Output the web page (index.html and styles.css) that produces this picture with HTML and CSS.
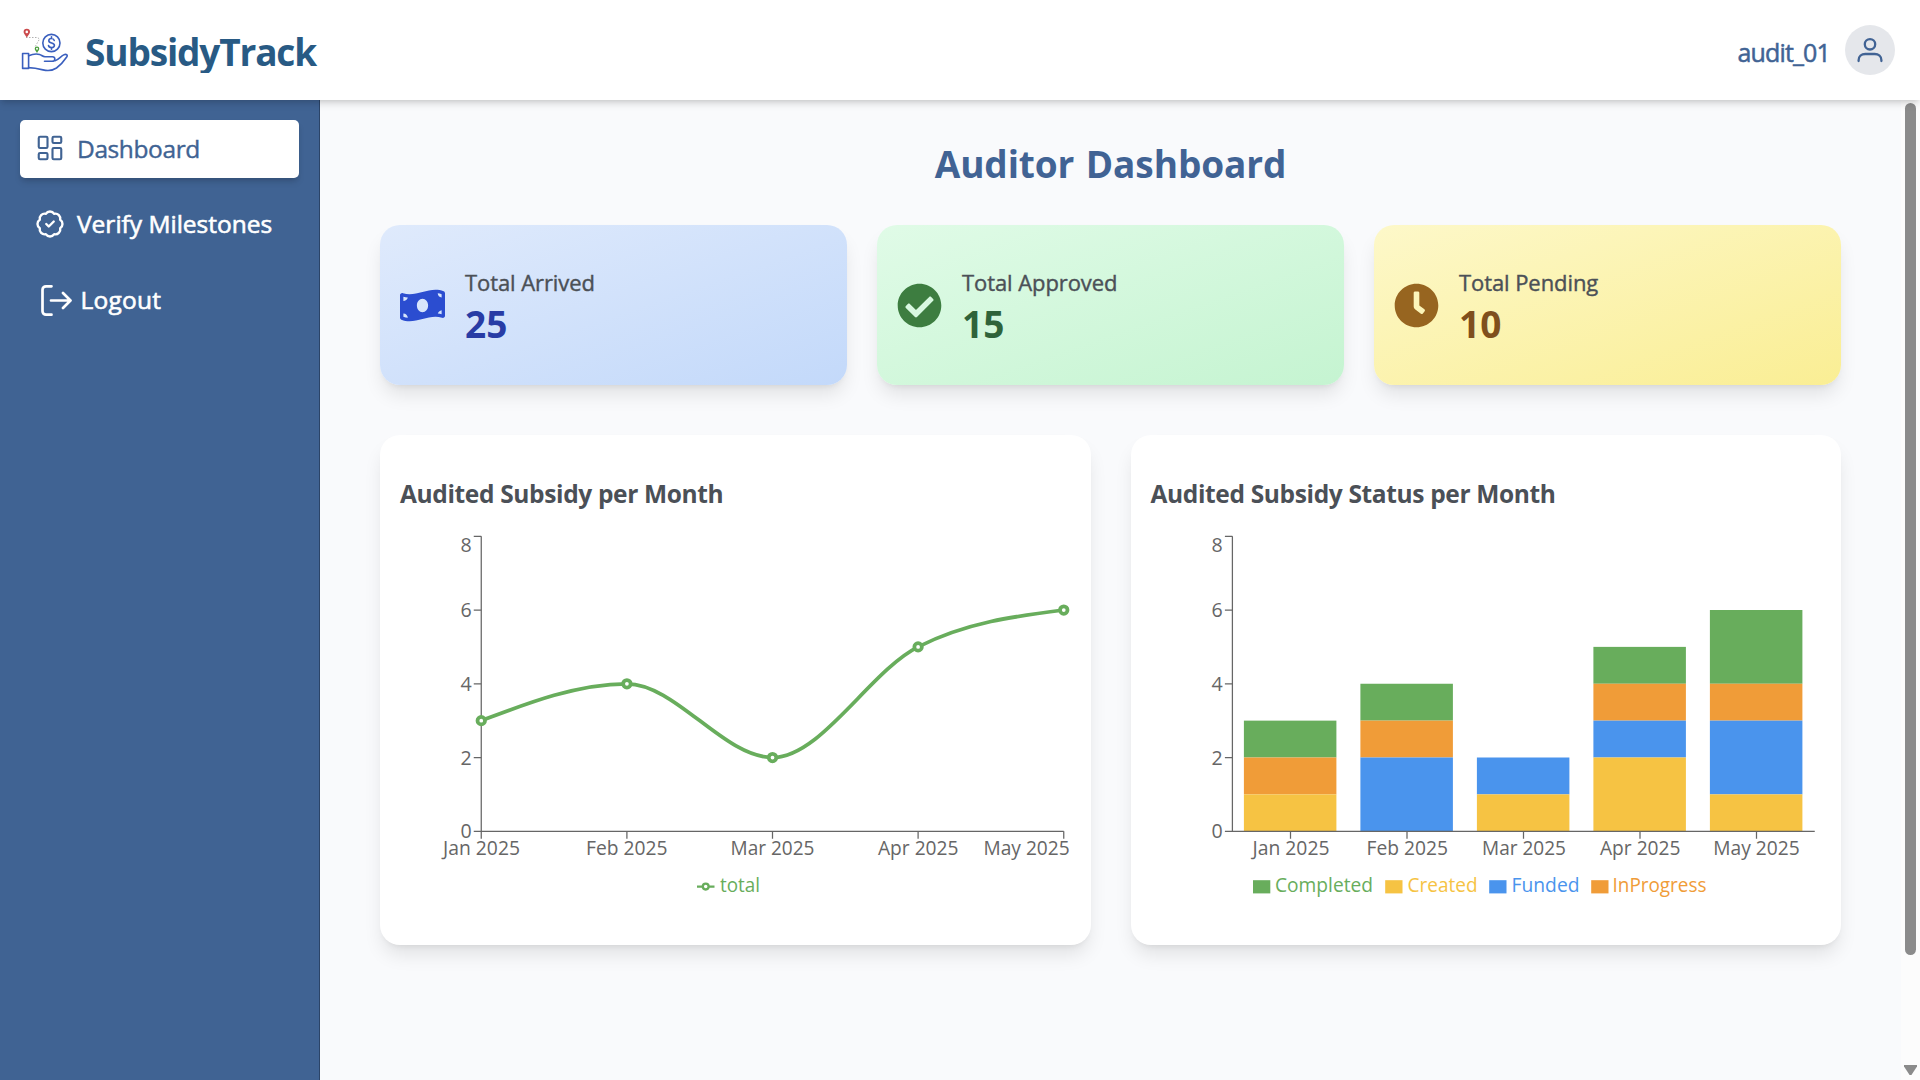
FILE: index.html
```html
<!DOCTYPE html>
<html lang="en">
<head>
<meta charset="utf-8">
<title>SubsidyTrack</title>
<link rel="stylesheet" href="styles.css">
</head>
<body>
<header class="topbar">
  <div class="brand">
    <svg class="brand-logo" width="50" height="50" viewBox="0 0 50 50" fill="none">
      <path d="M6 12.500h11.500l2 1.500-4.500 8" stroke="#9a9a9a" stroke-width=".8" stroke-dasharray="1.500 1.500"/>
      <path d="M6.800 12.500C5 9.500 3.600 8.300 3.600 6.900a3.200 3.200 0 0 1 6.400 0c0 1.400-1.400 2.600-3.200 5.600z" fill="#cb4a4c"/>
      <circle cx="6.800" cy="6.900" r="1.300" fill="#fff"/>
      <path d="M17 28c-1.300-2.300-2.300-3.200-2.300-4.300a2.300 2.300 0 0 1 4.600 0c0 1.100-1 2-2.300 4.300z" fill="#4a9e3c"/>
      <circle cx="17" cy="23.700" r="1" fill="#fff"/>
      <g stroke="#3a5fbe" stroke-width="1.600" stroke-linecap="round" stroke-linejoin="round">
        <circle cx="31.400" cy="18" r="8.600"/>
        <path d="M34.200 15.400c-.3-1.300-1.300-1.900-2.700-1.900-1.500 0-2.700.8-2.700 2.200 0 3.200 5.600 1.400 5.600 4.600 0 1.400-1.300 2.300-2.900 2.300-1.500 0-2.700-.7-3-2.100M31.500 11.800v1.700M31.500 22.600v1.700"/>
        <path d="M2.600 28.500h6v14.900h-6z"/>
        <path d="M8.600 30.700c3-1.300 7.800-2.200 11-1.300 2 .6 3 2.200 5.400 2.300h7.500c3 0 3.400 4.500-.5 4.600h-7.500"/>
        <path d="M35 35.800c3.500-1.200 5.500-4.200 8.700-5.900 2.500-1.200 4.500 0 3 2.100-3 4.500-6.500 8.300-10.200 11-4 2.700-9 3-13.500 1.900-5-1.300-9-2.200-14.400-2.300"/>
      </g>
    </svg>
    <span class="brand-name">SubsidyTrack</span>
  </div>
  <div class="account">
    <span class="account-name">audit_01</span>
    <span class="avatar">
      <svg width="30" height="30" viewBox="0 0 30 30" fill="none" stroke="#416394" stroke-width="2.300" stroke-linecap="round">
        <circle cx="15" cy="9.300" r="5.200"/>
        <path d="M3.600 26v-.8c0-3.700 2.900-6.200 6.700-6.200h9.400c3.800 0 6.700 2.500 6.700 6.200v.8"/>
      </svg>
    </span>
  </div>
</header>
<div class="shell">
  <nav class="sidebar">
    <a class="nav-item active">
      <svg width="30" height="30" viewBox="0 0 24 24" fill="none" stroke="currentColor" stroke-width="1.700" stroke-linejoin="round"><rect x="3" y="3" width="7" height="9" rx="1"/><rect x="14" y="3" width="7" height="5" rx="1"/><rect x="14" y="12" width="7" height="9" rx="1"/><rect x="3" y="16" width="7" height="5" rx="1"/></svg>
      <span class="dashboard-label">Dashboard</span>
    </a>
    <a class="nav-item">
      <svg width="30" height="30" viewBox="0 0 24 24" fill="none" stroke="currentColor" stroke-width="1.900" stroke-linecap="round" stroke-linejoin="round"><path d="M3.850 8.620a4 4 0 0 1 4.780-4.770 4 4 0 0 1 6.740 0 4 4 0 0 1 4.780 4.780 4 4 0 0 1 0 6.740 4 4 0 0 1-4.770 4.780 4 4 0 0 1-6.750 0 4 4 0 0 1-4.780-4.770 4 4 0 0 1 0-6.760Z"/><path d="m9 12 2 2 4-4"/></svg>
      <span>Verify Milestones</span>
    </a>
    <a class="nav-item logout">
      <svg width="34" height="34" viewBox="0 0 34 34" fill="none" stroke="currentColor" stroke-width="2.700" stroke-linecap="round" stroke-linejoin="round"><path d="M13.500 3.300H8a3.500 3.500 0 0 0-3.500 3.500v21.400A3.500 3.500 0 0 0 8 31.700h5.500"/><path d="M13 17.500h19M25 10l7.500 7.500L25 25"/></svg>
      <span>Logout</span>
    </a>
  </nav>
  <main class="content">
    <h1 class="page-title">Auditor Dashboard</h1>
    <section class="stats">
      <article class="stat blue">
        <svg width="45" height="45" viewBox="0 0 640 512" fill="currentColor"><path d="M621.160 54.460C582.370 38.190 543.550 32 504.750 32c-123.170-.01-246.330 62.340-369.500 62.340-30.890 0-61.760-3.920-92.650-13.720-3.470-1.100-6.950-1.620-10.350-1.620C15.040 79 0 92.320 0 110.810v317.260c0 12.630 7.230 24.600 18.840 29.460C57.630 473.810 96.450 480 135.250 480c123.170 0 246.340-62.350 369.510-62.350 30.890 0 61.760 3.920 92.650 13.720 3.470 1.100 6.950 1.620 10.350 1.620 17.210 0 32.250-13.320 32.250-31.810V83.930c-.01-12.640-7.240-24.600-18.850-29.470zM48 132.220c20.120 5.040 41.120 7.570 62.720 8.930C104.840 170.540 79 192.690 48 192.690v-60.470zm0 285v-47.780c34.370 0 62.180 27.270 63.710 61.400-22.530-1.810-43.590-6.310-63.710-13.620zM320 352c-44.190 0-80-42.990-80-96 0-53.020 35.820-96 80-96s80 42.980 80 96c0 53.030-35.830 96-80 96zm272 27.780c-17.520-4.390-35.710-6.850-54.320-8.440 5.870-26.080 27.500-45.880 54.320-49.280v57.720zm0-236.110c-30.890-3.910-54.860-29.700-55.810-61.550 19.540 2.170 38.090 6.230 55.810 12.660v48.890z"/></svg>
        <div class="stat-text"><p class="stat-label">Total Arrived</p><p class="stat-value">25</p></div>
      </article>
      <article class="stat green">
        <svg width="45" height="45" viewBox="0 0 512 512" fill="currentColor"><path d="M504 256c0 136.967-111.033 248-248 248S8 392.967 8 256 119.033 8 256 8s248 111.033 248 248zM227.314 387.314l184-184c6.248-6.248 6.248-16.379 0-22.627l-22.627-22.627c-6.248-6.249-16.379-6.249-22.628 0L216 308.118l-70.059-70.059c-6.248-6.248-16.379-6.248-22.628 0l-22.627 22.627c-6.248 6.248-6.248 16.379 0 22.627l104 104c6.249 6.249 16.379 6.249 22.628.001z"/></svg>
        <div class="stat-text"><p class="stat-label">Total Approved</p><p class="stat-value">15</p></div>
      </article>
      <article class="stat yellow">
        <svg width="45" height="45" viewBox="0 0 512 512" fill="currentColor"><path d="M256,8C119,8,8,119,8,256S119,504,256,504,504,393,504,256,393,8,256,8Zm92.490,313h0l-20,25a16,16,0,0,1-22.490,2.500h0l-67-49.720a40,40,0,0,1-15-31.230V112a16,16,0,0,1,16-16h32a16,16,0,0,1,16,16V256l58,42.500A16,16,0,0,1,348.490,321Z"/></svg>
        <div class="stat-text"><p class="stat-label">Total Pending</p><p class="stat-value">10</p></div>
      </article>
    </section>
    <section class="charts">
      <article class="panel">
        <h2 class="panel-title">Audited Subsidy per Month</h2>
        <svg class="chart" width="670" height="375" viewBox="0 0 670 375">
          <g class="axis">
            <path d="M81.250 6.250V301.250H663.750"/>
            <path d="M73.750 6.250h7.500M73.750 80h7.500M73.750 153.750h7.500M73.750 227.500h7.500M73.750 301.250h7.500"/>
            <path d="M81.250 301.250v7.500M226.900 301.250v7.500M372.500 301.250v7.500M518.100 301.250v7.500M663.750 301.250v7.500"/>
          </g>
          <g class="tick">
            <text x="60.500" y="21.600" textLength="11">8</text><text x="60.500" y="87.200" textLength="11">6</text><text x="60.500" y="161" textLength="11">4</text><text x="60.500" y="234.800" textLength="11">2</text><text x="60.500" y="308.400" textLength="11">0</text>
            <text x="43" y="324.800" textLength="77" lengthAdjust="spacingAndGlyphs">Jan 2025</text>
            <text x="186" y="324.800" textLength="81.500" lengthAdjust="spacingAndGlyphs">Feb 2025</text>
            <text x="330.500" y="324.800" textLength="84" lengthAdjust="spacingAndGlyphs">Mar 2025</text>
            <text x="478" y="324.800" textLength="80.500" lengthAdjust="spacingAndGlyphs">Apr 2025</text>
            <text x="583.500" y="324.800" textLength="86.200" lengthAdjust="spacingAndGlyphs">May 2025</text>
          </g>
          <path class="line" d="M81.250 190.630C129.800 172.190 178.300 153.750 226.900 153.750C275.400 153.750 323.900 227.500 372.500 227.500C421 227.500 469.600 141.460 518.100 116.880C566.600 92.300 615.200 86.150 663.750 80"/>
          <g class="dots"><circle cx="81.250" cy="190.630" r="3.750"/><circle cx="226.900" cy="153.750" r="3.750"/><circle cx="372.500" cy="227.500" r="3.750"/><circle cx="518.100" cy="116.880" r="3.750"/><circle cx="663.750" cy="80" r="3.750"/></g>
          <g class="legend-line"><path d="M297 356.600h5.800M308.600 356.600h5.900"/><circle cx="305.700" cy="356.600" r="2.900"/></g>
          <text class="legend green-text" x="320" y="361.800" textLength="40" lengthAdjust="spacingAndGlyphs">total</text>
        </svg>
      </article>
      <article class="panel">
        <h2 class="panel-title">Audited Subsidy Status per Month</h2>
        <svg class="chart" width="670" height="375" viewBox="0.5 0 670 375">
          <g class="completed"><rect x="93.400" y="190.630" width="92.500" height="36.870"/><rect x="209.900" y="153.750" width="92.500" height="36.870"/><rect x="442.900" y="116.880" width="92.500" height="36.870"/><rect x="559.400" y="80" width="92.500" height="73.750"/></g>
          <g class="progress"><rect x="93.400" y="227.500" width="92.500" height="36.870"/><rect x="209.900" y="190.630" width="92.500" height="36.870"/><rect x="442.900" y="153.750" width="92.500" height="36.870"/><rect x="559.400" y="153.750" width="92.500" height="36.870"/></g>
          <g class="funded"><rect x="209.900" y="227.500" width="92.500" height="73.750"/><rect x="326.400" y="227.500" width="92.500" height="36.870"/><rect x="442.900" y="190.630" width="92.500" height="36.870"/><rect x="559.400" y="190.630" width="92.500" height="73.750"/></g>
          <g class="created"><rect x="93.400" y="264.370" width="92.500" height="36.880"/><rect x="326.400" y="264.370" width="92.500" height="36.880"/><rect x="442.900" y="227.500" width="92.500" height="73.750"/><rect x="559.400" y="264.370" width="92.500" height="36.880"/></g>
          <g class="axis">
            <path d="M81.900 6.250V301.250H664.250"/>
            <path d="M74.400 6.250h7.500M74.400 80h7.500M74.400 153.750h7.500M74.400 227.500h7.500M74.400 301.250h7.500"/>
            <path d="M140 301.250v7.500M256.500 301.250v7.500M373 301.250v7.500M489.500 301.250v7.500M606 301.250v7.500"/>
          </g>
          <g class="tick">
            <text x="61" y="21.600" textLength="11">8</text><text x="61" y="87.200" textLength="11">6</text><text x="61" y="161" textLength="11">4</text><text x="61" y="234.800" textLength="11">2</text><text x="61" y="308.400" textLength="11">0</text>
            <text x="102" y="324.800" textLength="77" lengthAdjust="spacingAndGlyphs">Jan 2025</text>
            <text x="216" y="324.800" textLength="81.500" lengthAdjust="spacingAndGlyphs">Feb 2025</text>
            <text x="331.500" y="324.800" textLength="84" lengthAdjust="spacingAndGlyphs">Mar 2025</text>
            <text x="449.500" y="324.800" textLength="80.500" lengthAdjust="spacingAndGlyphs">Apr 2025</text>
            <text x="562.700" y="324.800" textLength="86.500" lengthAdjust="spacingAndGlyphs">May 2025</text>
          </g>
          <rect class="completed" x="102.500" y="350.200" width="17.300" height="13.200"/><text class="legend green-text" x="124.500" y="361.800" textLength="98" lengthAdjust="spacingAndGlyphs">Completed</text>
          <rect class="created" x="234.700" y="350.200" width="17.300" height="13.200"/><text class="legend created" x="257" y="361.800" textLength="70" lengthAdjust="spacingAndGlyphs">Created</text>
          <rect class="funded" x="338.700" y="350.200" width="17.300" height="13.200"/><text class="legend funded" x="361" y="361.800" textLength="68" lengthAdjust="spacingAndGlyphs">Funded</text>
          <rect class="progress" x="440.700" y="350.200" width="17.300" height="13.200"/><text class="legend progress" x="462" y="361.800" textLength="94" lengthAdjust="spacingAndGlyphs">InProgress</text>
        </svg>
      </article>
    </section>
  </main>
  <div class="scrollbar"><span class="thumb"></span><span class="arrow"></span></div>
</div>
</body>
</html>
```
FILE: styles.css
```css
* { box-sizing: border-box; margin: 0; padding: 0; }
body {
  height: 1080px;
  display: flex;
  flex-direction: column;
  overflow: hidden;
  background: #f9fafc;
  font-family: "Open Sans", "Noto Sans", sans-serif;
  color: #4b5057;
}
.topbar {
  height: 100px;
  flex: none;
  display: flex;
  align-items: center;
  justify-content: space-between;
  padding: 0 25px 0 20px;
  background: #fff;
  box-shadow: 0 5px 7.5px -1px rgba(0, 0, 0, .12), 0 2.5px 5px -2px rgba(0, 0, 0, .12);
  z-index: 2;
}
.brand, .account { display: flex; align-items: center; }
.brand { gap: 15px; }
.brand-name {
  height: 37px;
  margin-top: 8px;
  padding-right: 2px;
  line-height: 31px;
  overflow: hidden;
  font-size: 37px;
  font-weight: 700;
  letter-spacing: -1.15px;
  color: #285a84;
}
.account { gap: 15px; color: #416394; }
.account-name {
  padding-top: 3px;
  font-size: 25px;
  letter-spacing: -.85px;
  -webkit-text-stroke: .5px currentColor;
}
.avatar {
  width: 50px;
  height: 50px;
  display: flex;
  align-items: center;
  justify-content: center;
  border-radius: 50%;
  background: #e5e7eb;
}
.shell { flex: 1; display: flex; min-height: 0; }
.sidebar {
  width: 320px;
  flex: none;
  padding: 20px;
  display: flex;
  flex-direction: column;
  gap: 18px;
  background: #406393;
  border-right: 1px solid #2b4468;
}
.nav-item {
  height: 57.5px;
  display: flex;
  align-items: center;
  gap: 12.5px;
  padding: 0 14px 1px 14.5px;
  border-radius: 5px;
  color: #fff;
  font-size: 24.5px;
  -webkit-text-stroke: .6px currentColor;
}
.nav-item.active {
  background: #fff;
  color: #406393;
  -webkit-text-stroke-width: .4px;
  box-shadow: 0 5px 7.5px -1px rgba(0, 0, 0, .12), 0 2.5px 5px -2px rgba(0, 0, 0, .12);
}
.dashboard-label { letter-spacing: -.4px; }
.nav-item.logout { padding-left: 18px; gap: 8.5px; letter-spacing: .25px; }
.logout svg { margin-top: 2px; }
.content { flex: 1; padding: 39px 60px 0; }
.page-title {
  height: 50px;
  margin-bottom: 36px;
  line-height: 50px;
  text-align: center;
  font-size: 37px;
  font-weight: 700;
  letter-spacing: -.1px;
  word-spacing: 2px;
  color: #416394;
}
.stats { display: grid; grid-template-columns: repeat(3, 1fr); gap: 30px; margin-bottom: 50px; }
.stat, .panel {
  border-radius: 20px;
  box-shadow: 0 12.5px 18.75px -3.75px rgba(0, 0, 0, .1), 0 5px 7.5px -5px rgba(0, 0, 0, .1);
}
.stat { height: 160px; display: flex; align-items: center; gap: 20px; padding: 0 20px; }
.blue { background: linear-gradient(to bottom right, #dfeafc, #c3d9fa); color: #2b4dd0; }
.green { background: linear-gradient(to bottom right, #e0fbe7, #c5f4d1); color: #3d7d40; }
.yellow { background: linear-gradient(to bottom right, #fdf8c9, #faee94); color: #976520; }
.stat-label {
  line-height: 35px;
  font-size: 22px;
  letter-spacing: -.08px;
  color: #4b5057;
  -webkit-text-stroke: .4px currentColor;
}
.stat-value { line-height: 45px; padding-top: 1px; margin-bottom: -1px; font-size: 37px; font-weight: 700; }
.blue .stat-value { color: #283ca5; }
.green .stat-value { color: #2f633a; }
.yellow .stat-value { color: #7f4f1d; }
.charts { display: grid; grid-template-columns: 1fr 1fr; gap: 40px; }
.panel { height: 510px; padding: 40px 20px 0; background: #fff; }
.panel-title {
  height: 55px;
  line-height: 38px;
  font-size: 24.5px;
  font-weight: 700;
  letter-spacing: -.35px;
  white-space: nowrap;
}
.chart { display: block; overflow: visible; }
.axis { fill: none; stroke: #666; stroke-width: 1.25; }
.tick, .legend { font-size: 19.6px; }
.tick { fill: #666; }
.line { fill: none; stroke: #68ad5c; stroke-width: 3.75; }
.dots { fill: #fff; stroke: #68ad5c; stroke-width: 3.75; }
.legend-line { fill: none; stroke: #68ad5c; stroke-width: 2.3; }
.completed, .green-text { fill: #68ad5c; }
.created { fill: #f6c343; }
.funded { fill: #4a94ed; }
.progress { fill: #f09c38; }
.scrollbar {
  width: 19px;
  flex: none;
  display: flex;
  flex-direction: column;
  justify-content: space-between;
  align-items: center;
  padding: 3px 0 5px;
  background: #fcfcfc;
}
.thumb { width: 11px; height: 852px; border-radius: 6px; background: #8b8b8b; }
.arrow { width: 13px; height: 10px; background: #8b8b8b; clip-path: polygon(0 0, 100% 0, 100% 15%, 57% 100%, 43% 100%, 0 15%); }
```
